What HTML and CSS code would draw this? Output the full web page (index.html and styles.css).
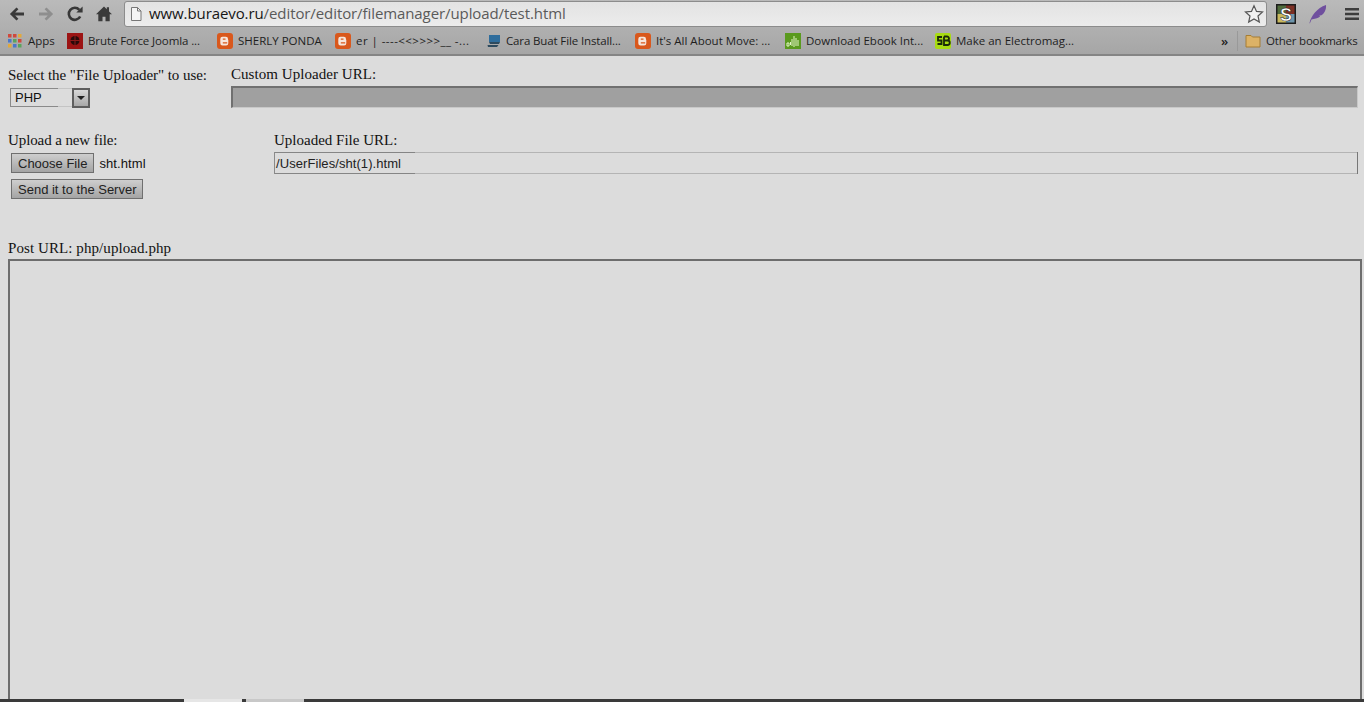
FILE: index.html
```html
<!DOCTYPE html>
<html lang="en">
<head>
<meta charset="utf-8">
<title>test</title>
<link rel="stylesheet" href="styles.css">
</head>
<body>
<div class="shell">
<header class="chrome">
  <div class="toolbar">
    <div class="nav">
      <svg class="nav-icon" viewBox="0 0 18 18"><path d="M16 7.400H7.200l3.200-3.200-1.900-1.800L1.900 9l6.600 6.600 1.900-1.800-3.200-3.200H16z" fill="#3a3a3a"/></svg>
      <svg class="nav-icon" viewBox="0 0 18 18"><path d="M2 7.400h8.800L7.600 4.200l1.900-1.800L16.100 9l-6.600 6.600-1.900-1.800 3.200-3.200H2z" fill="#8e8e8e"/></svg>
      <svg class="nav-icon" viewBox="0 0 18 18"><path d="M14.200 11.500A6 6 0 1 1 13.300 4.800" fill="none" stroke="#383838" stroke-width="2.600"/><path d="M10.300 7.600h6.300V1.400z" fill="#383838"/></svg>
      <svg class="nav-icon" viewBox="0 0 18 18"><path d="M9 1.600 1 9.300h2.300v7h4.200v-4.600h3v4.600h4.200v-7H17l-3-2.900V2.300h-2.200v2z" fill="#3a3a3a"/></svg>
    </div>
    <div class="omnibox">
      <svg class="page-icon" viewBox="0 0 14 16"><path d="M2.500 1.500h6l3.500 3.500v9.500H2.500z" fill="#f4f4f4" stroke="#777"/><path d="M8.500 1.500V5H12" fill="none" stroke="#777"/></svg>
      <span class="url"><b class="host">www.buraevo.ru</b>/editor/editor/filemanager/upload/test.html</span>
      <svg class="star" viewBox="0 0 20 20"><path d="M10 1.800l2.500 5.600 6 .6-4.500 4 1.300 6L10 15l-5.300 3 1.300-6-4.500-4 6-.6z" fill="#f2f2f2" stroke="#555" stroke-width="1.200"/></svg>
    </div>
    <div class="extensions">
      <svg class="ext-s" viewBox="0 0 20 20"><rect width="20" height="20" fill="#1c1c1c"/><rect x="1.500" y="1.500" width="8.500" height="8.500" fill="#4f6b3b"/><rect x="10" y="1.500" width="8.500" height="8.500" fill="#7d2f24"/><rect x="1.500" y="10" width="8.500" height="8.500" fill="#c9b95e"/><rect x="10" y="10" width="8.500" height="8.500" fill="#6d95ab"/><text x="10" y="16.500" class="ext-s-letter">S</text></svg>
      <svg class="ext-feather" viewBox="0 0 20 20"><path d="M1.500 19C3 12 9 4 18 1c.5 5-2 9-5 10.500l-1.500-.3.500 1.300C10 14.500 6 15 3.500 15.500L1.800 19.500z" fill="#6f4f9e"/></svg>
      <svg class="menu" viewBox="0 0 14 14"><path d="M0 1h14v2.500H0zM0 5.800h14v2.500H0zM0 10.500h14V13H0z" fill="#3d3d3d"/></svg>
    </div>
  </div>
  <nav class="bookmarks">
    <span class="bm bm-apps">
      <svg class="fav" viewBox="0 0 16 16"><g fill="#d0483c"><rect x="1" y="1" width="3.500" height="3.500"/><rect x="6" y="1" width="3.500" height="3.500"/></g><rect x="11" y="1" width="3.500" height="3.500" fill="#e2a93b"/><rect x="1" y="6" width="3.500" height="3.500" fill="#4b78c9"/><rect x="6" y="6" width="3.500" height="3.500" fill="#5ba55b"/><rect x="11" y="6" width="3.500" height="3.500" fill="#d0483c"/><rect x="1" y="11" width="3.500" height="3.500" fill="#e2a93b"/><rect x="6" y="11" width="3.500" height="3.500" fill="#4b78c9"/><rect x="11" y="11" width="3.500" height="3.500" fill="#5ba55b"/></svg>
      Apps
    </span>
    <span class="bm bm-brute">
      <svg class="fav" viewBox="0 0 16 16"><rect width="16" height="16" fill="#9c1414"/><circle cx="8" cy="7.500" r="4.500" fill="#2a0a0a"/><path d="M8 2v12M3 7.500h10" stroke="#8c1a1a"/></svg>
      Brute Force Joomla ...
    </span>
    <span class="bm bm-sherly">
      <svg class="fav" viewBox="0 0 16 16"><use href="#blogger"/></svg>
      SHERLY PONDA
    </span>
    <span class="bm bm-er">
      <svg class="fav" viewBox="0 0 16 16"><use href="#blogger"/></svg>
      er | ----&lt;&lt;&gt;&gt;&gt;&gt;__ -...
    </span>
    <span class="bm bm-cara">
      <svg class="fav" viewBox="0 0 16 16"><path d="M3 2h11v7H3z" fill="#2f6d9c"/><path d="M3 9h11l-1 2H4zM1.500 12h11L11 14H2z" fill="#2d4a5e"/></svg>
      Cara Buat File Install...
    </span>
    <span class="bm bm-move">
      <svg class="fav" viewBox="0 0 16 16"><use href="#blogger"/></svg>
      It's All About Move: ...
    </span>
    <span class="bm bm-ebook">
      <svg class="fav" viewBox="0 0 16 16"><rect width="16" height="16" fill="#5a9a1e"/><path d="M2 13v-3h2v3zM5.500 12V9M9 14V3M11 13V5M13 13V7M7 13V6" stroke="#e4f5c8" fill="none"/></svg>
      Download Ebook Int...
    </span>
    <span class="bm bm-make">
      <svg class="fav" viewBox="0 0 16 16"><rect width="16" height="16" rx="2" fill="#a8dc12"/><path d="M7 4H3v3.500h3.500V11H2.500M9 3.500v8.500h3.500a1.500 1.500 0 0 0 0-4.500H9m0 0h3a1.500 1.500 0 0 0 0-4H9" fill="none" stroke="#1b2a08" stroke-width="1.800"/></svg>
      Make an Electromag...
    </span>
    <span class="bm-more">»</span>
    <span class="bm bm-other">
      <svg class="fav" viewBox="0 0 16 16"><path d="M1 4V2.500h5L7.500 4H15v10H1z" fill="#dcb266" stroke="#a57d35"/></svg>
      Other bookmarks
    </span>
  </nav>
</header>
<svg class="defs" width="0" height="0"><defs><g id="blogger"><rect width="16" height="16" rx="3" fill="#d9581c"/><path d="M5.500 3.800h3.300a2.200 2.200 0 0 1 2.200 2.200v.7h.3v3.500a2.200 2.200 0 0 1-2.200 2.200h-3.600a2.200 2.200 0 0 1-2.200-2.200V6a2.200 2.200 0 0 1 2.200-2.200z" fill="#f6e6dc"/><path d="M5.800 6.200h2.700M5.800 9.800h4.400" stroke="#d9581c" stroke-width="1.200"/></g></defs></svg>
<main class="page">
  <section class="row row-top">
    <div class="col-select">
      <label class="lab lab-select">Select the "File Uploader" to use:</label>
      <div class="fake-select"><span class="fake-select-value">PHP</span><span class="fake-select-btn"><i></i></span></div>
    </div>
    <div class="col-custom">
      <label class="lab lab-custom">Custom Uploader URL:</label>
      <div class="field field-disabled"></div>
    </div>
  </section>
  <section class="row row-upload">
    <div class="col-upload">
      <label class="lab lab-upload">Upload a new file:</label>
      <div class="file-line"><span class="btn btn-choose">Choose File</span><span class="file-name">sht.html</span></div>
      <span class="btn btn-send">Send it to the Server</span>
    </div>
    <div class="col-url">
      <label class="lab">Uploaded File URL:</label>
      <div class="field field-url">/UserFiles/sht(1).html</div>
    </div>
  </section>
  <div class="post-url">Post URL: php/upload.php</div>
  <div class="frame"></div>
</main>
<footer class="downloads"><span class="tab tab-a"></span><span class="tab tab-b"></span></footer>
</div>
</body>
</html>
```
FILE: styles.css
```css
* { box-sizing: border-box; }
html, body { margin: 0; height: 100%; overflow: hidden; }
.shell { height: 702px; display: flex; flex-direction: column; background: #dcdcdc; overflow: hidden; }
.defs { position: absolute; }
.chrome { flex: none; height: 56px; background: linear-gradient(#bababa, #a6a6a6); border-bottom: 2px solid #858585; }
.toolbar { height: 28px; display: flex; align-items: center; padding-left: 8px; }
.nav { display: flex; gap: 11px; width: 116px; flex: none; }
.nav-icon { width: 18px; height: 18px; display: block; }
.omnibox { width: 1143px; height: 26px; flex: none; display: flex; align-items: center; background: linear-gradient(#e3e3e3, #ececec); border: 1px solid #8c8c8c; border-radius: 3px; padding: 0 2px 0 4px; }
.page-icon { width: 14px; height: 16px; margin-right: 6px; flex: none; }
.url { flex: 1; font: 15px "Open Sans", "Liberation Sans", sans-serif; color: #5a5a5a; white-space: nowrap; letter-spacing: -.09px; padding-bottom: 2px; }
.host { font-weight: 400; color: #161616; }
.star { width: 20px; height: 20px; flex: none; }
.extensions { display: flex; align-items: center; padding-left: 9px; }
.ext-s { width: 20px; height: 20px; }
.ext-s-letter { font: bold 18px "Liberation Sans", sans-serif; fill: #fff; stroke: #111; stroke-width: .5px; text-anchor: middle; }
.ext-feather { width: 20px; height: 20px; margin-left: 12px; }
.menu { width: 14px; height: 14px; margin-left: 17px; }
.bookmarks { height: 25px; display: flex; align-items: center; padding-left: 7px; font: 11.500px "Open Sans", "Liberation Sans", sans-serif; color: #1e1e1e; white-space: nowrap; }
.bm { display: flex; align-items: center; gap: 5px; flex: none; }
.fav { width: 16px; height: 16px; flex: none; }
.bm-apps { width: 60px; }
.bm-brute { width: 150px; letter-spacing: -.1px; }
.bm-sherly { width: 118px; }
.bm-er { width: 151px; letter-spacing: .45px; }
.bm-cara { width: 149px; gap: 4px; letter-spacing: -.13px; }
.bm-move { width: 150px; }
.bm-ebook { width: 150px; }
.bm-make { width: 286px; }
.bm-more { width: 17px; height: 20px; line-height: 20px; margin-right: 7px; flex: none; border-right: 1px solid #999; font-size: 13px; font-weight: 600; }
.bm-other { letter-spacing: -.2px; }
.page { flex: 1; min-height: 0; padding: 9px 2px 0 8px; font: 15px "Liberation Serif", serif; color: #111; overflow: hidden; }
.row { display: flex; }
.lab { display: block; line-height: 19px; white-space: nowrap; }
.lab-select { margin-top: 1px; letter-spacing: -.06px; }
.lab-custom { letter-spacing: .05px; }
.lab-upload { letter-spacing: -.1px; }
.col-select { width: 223px; flex: none; }
.col-custom { flex: 1; padding-right: 4px; }
.fake-select { width: 80px; height: 19px; margin: 3px 0 0 2px; display: flex; justify-content: space-between; align-items: center; border-left: 1px solid #8a8a8a; background: linear-gradient(#8a8a8a, #8a8a8a) top left / 47px 1px no-repeat, linear-gradient(#8a8a8a, #8a8a8a) bottom left / 47px 1px no-repeat, linear-gradient(#c4c4c4, #c4c4c4) top left / 100% 1px no-repeat, linear-gradient(#c4c4c4, #c4c4c4) bottom left / 100% 1px no-repeat; font: 13px "Liberation Sans", sans-serif; padding-left: 4px; }
.fake-select-btn { width: 18px; height: 20px; border: 2px solid #5e5e5e; background: linear-gradient(#d8d8d8, #a8a8a8); display: flex; align-items: center; justify-content: center; }
.fake-select-btn i { border: 4px solid transparent; border-top: 4px solid #222; border-bottom: 0; }
.field { height: 22px; margin-top: 2px; }
.field-disabled { background: #a0a0a0; border-top: 2px solid #707070; border-left: 2px solid #707070; border-right: 1px solid #c8c8c8; border-bottom: 1px solid #c8c8c8; }
.row-upload { margin-top: 23px; }
.col-upload { width: 266px; flex: none; }
.col-url { flex: 1; padding-right: 4px; }
.field-url { font: 13px/23px "Liberation Sans", sans-serif; letter-spacing: .07px; padding-left: 1px; border-left: 1px solid #8a8a8a; border-right: 1px solid #777; background: linear-gradient(#858585, #858585) top left / 140px 1px no-repeat, linear-gradient(#858585, #858585) bottom left / 140px 1px no-repeat, linear-gradient(#b4b4b4, #b4b4b4) top left / 100% 1px no-repeat, linear-gradient(#b4b4b4, #b4b4b4) bottom left / 100% 1px no-repeat; color: #222; }
.file-line { display: flex; align-items: center; margin: 3px 0 0 3px; }
.btn { display: inline-block; height: 20px; padding: 0 6px; border: 1px solid #6f6f6f; background: linear-gradient(#cecece, #a4a4a4); font: 13px/19px "Liberation Sans", sans-serif; color: #222; white-space: nowrap; }
.file-name { font: 13px "Liberation Sans", sans-serif; margin-left: 5px; letter-spacing: .1px; }
.btn-send { margin: 6px 0 0 3px; padding-right: 5px; }
.post-url { margin-top: 40px; line-height: 19px; letter-spacing: .08px; }
.frame { height: 460px; margin-top: 1px; border: 2px solid #6d6d6d; border-bottom: 0; }
.downloads { flex: none; height: 3px; background: #3a3a3a; display: flex; padding-left: 184px; gap: 4px; }
.tab { width: 58px; background: #e6e6e6; }
.tab-b { background: #c8c8c8; }
```
